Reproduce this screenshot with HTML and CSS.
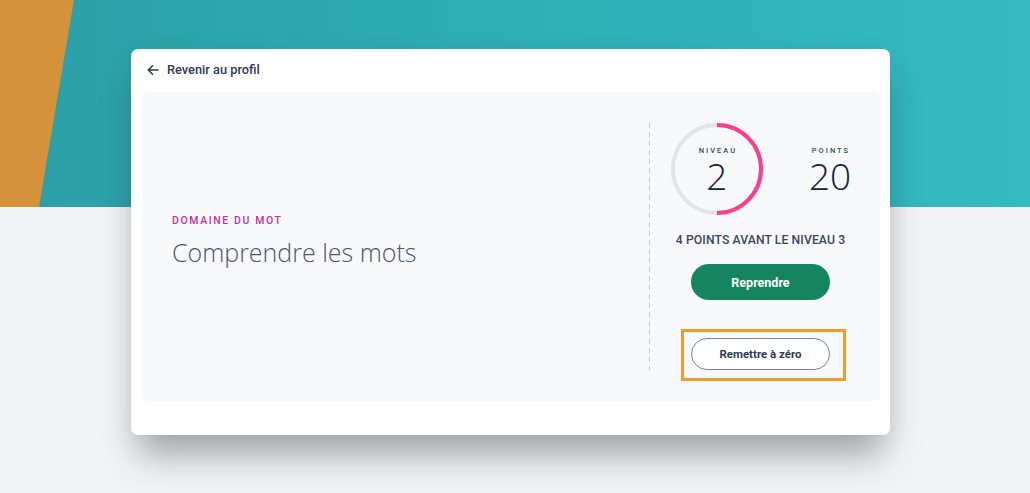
FILE: index.html
```html
<!DOCTYPE html>
<html lang="fr">
<head>
<meta charset="utf-8">
<title>Comprendre les mots</title>
<link rel="stylesheet" href="styles.css">
</head>
<body>
<div class="page">
  <div class="deco-orange"></div>
  <div class="card">
    <header class="card-head">
      <a class="back" href="#">
        <svg class="back-icon" width="12" height="12" viewBox="0 0 12 12" aria-hidden="true"><path d="M11 6H1.5M5.5 1.8L1.3 6l4.2 4.2" fill="none" stroke="#2f3a55" stroke-width="1.6" stroke-linecap="round" stroke-linejoin="round"/></svg>
        <span>Revenir au profil</span>
      </a>
    </header>
    <section class="panel">
      <div class="intro">
        <div class="eyebrow">DOMAINE DU MOT</div>
        <h1 class="title">Comprendre les mots</h1>
      </div>
      <div class="side">
        <div class="stats">
          <div class="ring">
            <svg class="ring-svg" width="92" height="92" viewBox="0 0 92 92" aria-hidden="true">
              <circle cx="46" cy="46" r="44" fill="none" stroke="#e3e4e6" stroke-width="4"/>
              <path d="M46 2 A44 44 0 0 1 46 90" fill="none" stroke="#ff3b8b" stroke-width="4"/>
            </svg>
            <div class="ring-label">NIVEAU</div>
            <div class="ring-value">2</div>
          </div>
          <div class="points">
            <div class="points-label">POINTS</div>
            <div class="points-value">20</div>
          </div>
        </div>
        <div class="remaining">4 POINTS AVANT LE NIVEAU 3</div>
        <button class="btn btn-primary">Reprendre</button>
        <div class="highlight">
          <button class="btn btn-outline">Remettre à zéro</button>
        </div>
      </div>
    </section>
  </div>
</div>
</body>
</html>
```

FILE: styles.css
```css
* { box-sizing: border-box; }
html, body { margin: 0; padding: 0; }
body {
  font-family: Roboto, "Liberation Sans", sans-serif;
  background: #f2f3f5;
  width: 1030px;
  height: 493px;
  overflow: hidden;
}
.page {
  position: relative;
  height: 493px;
  padding-top: 49px;
  background:
    linear-gradient(to right, #2b9fa6 0%, #2faeb5 50%, #34bac3 100%) top / 100% 207px no-repeat,
    #f2f3f5;
}
.deco-orange {
  position: absolute;
  left: 0;
  top: 0;
  width: 76px;
  height: 207px;
  background: #d6923a;
  clip-path: polygon(0 0, 74px 0, 39px 207px, 0 207px);
}
.card {
  position: relative;
  margin-left: 131px;
  width: 759px;
  height: 386px;
  background: #ffffff;
  border-radius: 7px;
  padding: 0 10px 34px 11px;
  box-shadow: 0 28px 34px -8px rgba(40, 44, 52, 0.38), 0 6px 30px rgba(40, 44, 52, 0.06);
}
.card-head {
  height: 43px;
  display: flex;
  align-items: center;
  padding-left: 5px;
}
.back {
  display: flex;
  align-items: center;
  gap: 8px;
  text-decoration: none;
  color: #2f3a55;
  font-size: 12.8px;
  font-weight: 500;
  margin-top: -2px;
}
.back-icon { display: block; }
.panel {
  height: 309px;
  background: #f8f9fb;
  border-radius: 6px;
  display: flex;
  padding: 31px 8px 31px 30px;
}
.intro {
  flex: 1;
  display: flex;
  flex-direction: column;
  justify-content: center;
  padding-bottom: 10px;
}
.eyebrow {
  font-size: 10.5px;
  font-weight: 500;
  letter-spacing: 1.6px;
  color: #c4309a;
  margin-bottom: 8px;
}
.title {
  margin: 0;
  font-family: "Open Sans", sans-serif;
  font-weight: 300;
  font-size: 25px;
  color: #4a5570;
  line-height: 34px;
}
.side {
  position: relative;
  width: 223px;
  height: 247px;
  display: flex;
  flex-direction: column;
  align-items: center;
}
.side > * { flex-shrink: 0; }
.side::before {
  content: "";
  position: absolute;
  left: 0;
  top: 0;
  width: 1px;
  height: 247px;
  background: repeating-linear-gradient(to bottom, #c3c7ce 0 5px, transparent 5px 9px);
}
.stats {
  display: flex;
  align-items: flex-start;
  gap: 46px;
  margin-left: 1px;
}
.ring {
  position: relative;
  width: 92px;
  height: 92px;
  display: flex;
  flex-direction: column;
  align-items: center;
  padding-top: 23px;
}
.ring-svg {
  position: absolute;
  left: 0;
  top: 0;
}
.ring-label, .points-label {
  font-size: 7.5px;
  font-weight: 500;
  letter-spacing: 2px;
  color: #3a4460;
  line-height: 10px;
  margin-right: -2px;
}
.ring-value, .points-value {
  font-family: "Open Sans", sans-serif;
  font-weight: 300;
  font-size: 37px;
  line-height: 40px;
  color: #18213d;
}
.points {
  display: flex;
  flex-direction: column;
  align-items: center;
  padding-top: 23px;
}
.remaining {
  margin-top: 18px;
  font-size: 12.2px;
  font-weight: 500;
  color: #3b4660;
  letter-spacing: 0.1px;
}
.btn {
  font-family: Roboto, "Liberation Sans", sans-serif;
  font-weight: 700;
  border-radius: 20px;
  cursor: pointer;
}
.btn-primary {
  margin-top: 17px;
  width: 139px;
  height: 36px;
  border: none;
  background: #14855e;
  color: #ffffff;
  font-size: 12.5px;
}
.highlight {
  margin-top: 29px;
  margin-left: 6px;
  border: 3px solid #f29a2c;
  padding: 6px 13px 8px 7px;
}
.btn-outline {
  display: block;
  width: 139px;
  height: 32px;
  border: 1px solid #7c8398;
  background: #ffffff;
  color: #2f3a55;
  font-size: 11.5px;
}
```
